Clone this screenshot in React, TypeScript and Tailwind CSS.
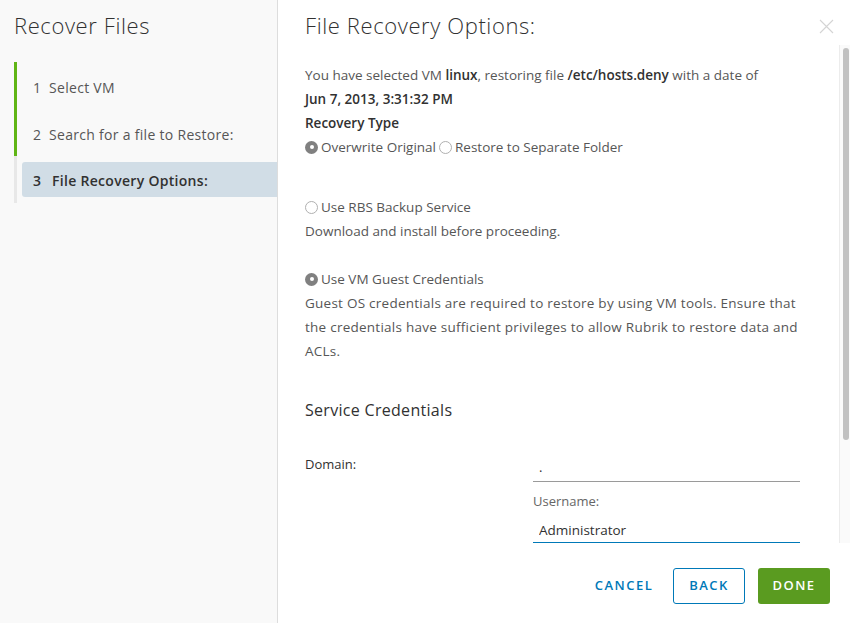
import { useState } from "react";

const font = { fontFamily: "'Open Sans', 'Liberation Sans', sans-serif" };

const steps = [
  { n: 1, label: "Select VM", done: true },
  { n: 2, label: "Search for a file to Restore:", done: true },
  { n: 3, label: "File Recovery Options:", done: false },
];

const Radio = ({ checked }: { checked: boolean }) =>
  checked ? (
    <span className="inline-flex h-[13px] w-[13px] items-center justify-center rounded-full bg-[#808080]">
      <span className="h-[4px] w-[4px] rounded-full bg-white" />
    </span>
  ) : (
    <span className="inline-block h-[13px] w-[13px] rounded-full border border-[#b0b0b0] bg-white" />
  );

const RadioOption = ({ checked, label }: { checked: boolean; label: string }) => (
  <label className="flex h-[24px] items-center gap-[3px]">
    <Radio checked={checked} />
    <span>{label}</span>
  </label>
);

const App = () => {
  const [domain, setDomain] = useState(".");
  const [username, setUsername] = useState("Administrator");

  return (
    <div style={font} className="flex h-[623px] w-[850px] overflow-hidden bg-white text-[#565656]">
      {/* wizard steps */}
      <div className="w-[278px] shrink-0 border-r border-[#dddddd] bg-[#f9f9f9]">
        <h1 className="pl-[14px] pt-[11px] text-[22px] leading-[28px] font-light tracking-[0.6px] text-[#313131]">
          Recover Files
        </h1>
        <div className="mt-[23px] flex flex-col">
          {steps.map((s) => (
            <div key={s.n} className="flex h-[47px]">
              <div className={`ml-[14px] w-[3px] ${s.done ? "bg-[#60b515]" : "bg-[#e8e8e8]"}`} />
              {s.done ? (
                <div className="flex flex-1 items-center pl-[16px] pt-[3px] text-[14px] tracking-[0.3px]">
                  <span className="w-[16px]">{s.n}</span>
                  <span>{s.label}</span>
                </div>
              ) : (
                <div className="mb-[6px] ml-[5px] mt-[6px] flex flex-1 items-center rounded-l-[3px] bg-[#d1dde6] pl-[11px] pt-[2px] text-[14px] font-semibold tracking-[0.3px] text-[#313131]">
                  <span className="w-[19px]">{s.n}</span>
                  <span>{s.label}</span>
                </div>
              )}
            </div>
          ))}
        </div>
      </div>

      {/* main */}
      <div className="flex min-w-0 flex-1 flex-col">
        <div className="flex h-[45px] items-start justify-between pl-[27px] pr-[16px] pt-[11px]">
          <h2 className="text-[22px] leading-[28px] font-light tracking-[0.6px] text-[#313131]">
            File Recovery Options:
          </h2>
          <svg width="15" height="15" viewBox="0 0 15 15" className="mt-[8px]">
            <path d="M1 1L14 14M14 1L1 14" stroke="#d4d4d4" strokeWidth="1.1" />
          </svg>
        </div>

        <div className="flex min-h-0 flex-1">
          <div className="flex-1 overflow-hidden whitespace-nowrap pl-[27px] pr-[20px] pt-[18px] text-[13.5px] leading-[24px]">
            <p>
              You have selected VM <b className="font-semibold text-[#313131]">linux</b>, restoring file{" "}
              <b className="font-semibold text-[#313131]">/etc/hosts.deny</b> with a date of
              <br />
              <b className="font-semibold text-[#313131]">Jun 7, 2013, 3:31:32 PM</b>
            </p>
            <p className="font-semibold text-[#313131]">Recovery Type</p>
            <div className="flex items-center gap-[3px]">
              <RadioOption checked label="Overwrite Original" />
              <RadioOption checked={false} label="Restore to Separate Folder" />
            </div>

            <div className="mt-[36px]">
              <RadioOption checked={false} label="Use RBS Backup Service" />
              <p>Download and install before proceeding.</p>
            </div>

            <div className="mt-[24px]">
              <RadioOption checked label="Use VM Guest Credentials" />
              <p className="tracking-[0.25px]">
                Guest OS credentials are required to restore by using VM tools. Ensure that
                <br />
                the credentials have sufficient privileges to allow Rubrik to restore data and
                <br />
                ACLs.
              </p>
            </div>

            <h3 className="mt-[35px] text-[16px] leading-[24px] tracking-[0.3px] text-[#313131]">
              Service Credentials
            </h3>

            <div className="mt-[30px] flex">
              <div className="w-[228px] pt-[2px] text-[13px] leading-[20px] text-[#313131]">Domain:</div>
              <div className="w-[267px]">
                <input
                  value={domain}
                  onChange={(e) => setDomain(e.target.value)}
                  className="h-[30px] w-full border-b border-[#9a9a9a] px-[6px] text-[13px] text-[#313131] outline-none"
                />
                <div className="mt-[9px] text-[13px] leading-[20px] text-[#666666]">Username:</div>
                <input
                  value={username}
                  onChange={(e) => setUsername(e.target.value)}
                  className="mt-[7px] h-[26px] w-full border-b-2 border-[#0079b8] px-[6px] text-[13.5px] text-[#313131] outline-none"
                />
              </div>
            </div>
          </div>
          {/* scrollbar */}
          <div className="w-[11px] shrink-0 border-l border-[#ececec] bg-[#fafafa] pl-[3px] pt-[3px]">
            <div className="h-[392px] w-[6px] rounded-full bg-[#c1c1c1]" />
          </div>
        </div>

        <div className="flex h-[80px] shrink-0 items-start justify-end gap-[13px] pr-[20px] pt-[25px] text-[13px] font-semibold tracking-[1.5px]">
          <button className="h-[36px] w-[72px] rounded-[3px] text-[#0079b8]">CANCEL</button>
          <button className="h-[36px] w-[72px] rounded-[3px] border border-[#0079b8] text-[#0079b8]">BACK</button>
          <button className="h-[36px] w-[72px] rounded-[3px] bg-[#5a9b20] text-white">DONE</button>
        </div>
      </div>
    </div>
  );
};

export default App;
